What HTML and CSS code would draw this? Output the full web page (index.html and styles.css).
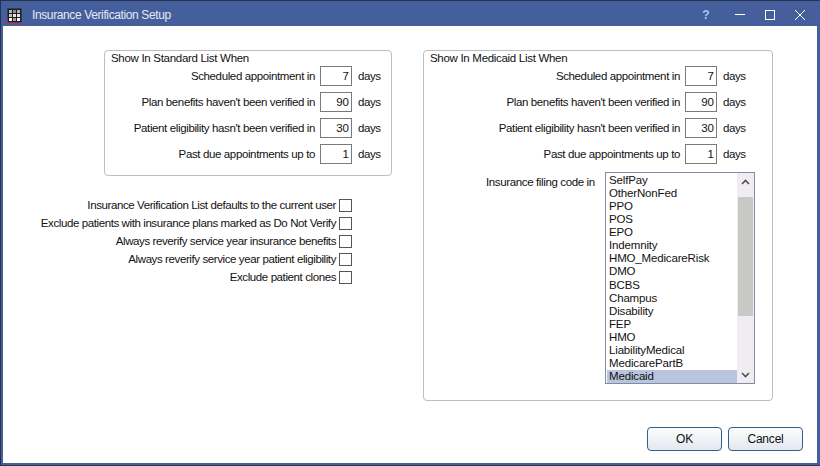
FILE: index.html
```html
<!DOCTYPE html>
<html lang="en">
<head>
<meta charset="utf-8">
<title>Insurance Verification Setup</title>
<link rel="stylesheet" href="styles.css">
</head>
<body>
<div class="window">
  <header class="titlebar">
    <svg class="appicon" width="15" height="15" viewBox="0 0 15 15">
      <rect x="0.5" y="0.5" width="14" height="14" fill="#1c1c1c"/>
      <path d="M2 2h3v3H2zM10 2h3v3h-3z" fill="#b4b4b4"/>
      <path d="M6 2h3v3H6z" fill="#8c8c8c"/>
      <path d="M2 6h3v3H2z" fill="#c4c4c4"/>
      <path d="M6 6h3v3H6zM10 6h3v3h-3z" fill="#e6e6e6"/>
      <path d="M2 10h3v3H2zM10 10h3v3h-3z" fill="#fafafa"/>
      <path d="M6 10h3v3H6z" fill="#a0a0a0"/>
      <path d="M0.5 10v4.5h14" fill="none" stroke="#d01818"/>
    </svg>
    <span class="title">Insurance Verification Setup</span>
    <span class="help">?</span>
    <svg class="ctl" width="12" height="12" viewBox="0 0 12 12"><path d="M1 5.5h10" stroke="#fff"/></svg>
    <svg class="ctl" width="12" height="12" viewBox="0 0 12 12"><rect x="1.5" y="1.5" width="9" height="9" fill="none" stroke="#fff"/></svg>
    <svg class="ctl" width="12" height="12" viewBox="0 0 12 12"><path d="M1 1l10 10M11 1L1 11" stroke="#fff" fill="none"/></svg>
  </header>
  <main class="client">
    <div class="columns">
      <div class="leftcol">
        <fieldset class="group group-std">
          <legend class="group-title">Show In Standard List When</legend>
          <div class="row"><label class="lbl">Scheduled appointment in</label><span class="num">7</span><span class="unit">days</span></div>
          <div class="row"><label class="lbl">Plan benefits haven't been verified in</label><span class="num">90</span><span class="unit">days</span></div>
          <div class="row"><label class="lbl">Patient eligibility hasn't been verified in</label><span class="num">30</span><span class="unit">days</span></div>
          <div class="row"><label class="lbl">Past due appointments up to</label><span class="num">1</span><span class="unit">days</span></div>
        </fieldset>
        <div class="checks">
          <div class="check"><span>Insurance Verification List defaults to the current user</span><i class="box"></i></div>
          <div class="check"><span>Exclude patients with insurance plans marked as Do Not Verify</span><i class="box"></i></div>
          <div class="check"><span>Always reverify service year insurance benefits</span><i class="box"></i></div>
          <div class="check"><span>Always reverify service year patient eligibility</span><i class="box"></i></div>
          <div class="check"><span>Exclude patient clones</span><i class="box"></i></div>
        </div>
      </div>
      <fieldset class="group group-med">
        <legend class="group-title">Show In Medicaid List When</legend>
        <div class="row"><label class="lbl">Scheduled appointment in</label><span class="num">7</span><span class="unit">days</span></div>
        <div class="row"><label class="lbl">Plan benefits haven't been verified in</label><span class="num">90</span><span class="unit">days</span></div>
        <div class="row"><label class="lbl">Patient eligibility hasn't been verified in</label><span class="num">30</span><span class="unit">days</span></div>
        <div class="row"><label class="lbl">Past due appointments up to</label><span class="num">1</span><span class="unit">days</span></div>
        <div class="filing">
          <label class="lbl filing-lbl">Insurance filing code in</label>
          <div class="listbox">
            <ul class="items">
              <li>SelfPay</li><li>OtherNonFed</li><li>PPO</li><li>POS</li><li>EPO</li><li>Indemnity</li><li>HMO_MedicareRisk</li><li>DMO</li><li>BCBS</li><li>Champus</li><li>Disability</li><li>FEP</li><li>HMO</li><li>LiabilityMedical</li><li>MedicarePartB</li><li class="sel">Medicaid</li>
            </ul>
            <div class="scroll">
              <div class="sbtn"><svg width="9" height="6" viewBox="0 0 9 6"><path d="M1 5l3.5-3.5L8 5" fill="none" stroke="#505050" stroke-width="1.6"/></svg></div>
              <div class="thumb"></div>
              <div class="track"></div>
              <div class="sbtn"><svg width="9" height="6" viewBox="0 0 9 6"><path d="M1 1l3.5 3.5L8 1" fill="none" stroke="#505050" stroke-width="1.6"/></svg></div>
            </div>
          </div>
        </div>
      </fieldset>
    </div>
    <footer class="actions">
      <button class="btn" type="button">OK</button>
      <button class="btn" type="button">Cancel</button>
    </footer>
  </main>
</div>
</body>
</html>
```
FILE: styles.css
```css
* { box-sizing: border-box; }
html, body { margin: 0; padding: 0; }
body {
  width: 820px;
  height: 466px;
  overflow: hidden;
  font-family: "Liberation Sans", Arial, sans-serif;
  font-size: 11.5px;
  color: #111;
  background: #fff;
}
.window {
  width: 820px;
  height: 466px;
  display: flex;
  flex-direction: column;
  background: #445f9b;
  border: 1px solid #26324f;
  border-right-color: #445f9b;
  padding: 0 2px 2px 2px;
}
.titlebar {
  height: 25px;
  flex: none;
  display: flex;
  align-items: center;
  color: #e4e9f4;
  padding-left: 4px;
}
.appicon { flex: none; margin-right: 10px; margin-top: 3px; }
.title { flex: 1; font-size: 12px; letter-spacing: -0.38px; margin-top: 2px; }
.help { width: 12px; text-align: center; color: #9fd0f5; font-size: 12px; font-weight: bold; margin-right: 22px; margin-top: 2px; }
.ctl { flex: none; margin-top: 3px; margin-right: 18px; }
.ctl:last-of-type { margin-right: 11px; }
.client {
  flex: 1;
  background: #fff;
  display: flex;
  flex-direction: column;
  padding: 24px 14px 12px 0;
  min-height: 0;
}
.columns { flex: 1; display: flex; align-items: flex-start; min-height: 0; }
.leftcol { width: 359px; flex: none; margin-left: 30px; margin-right: 31px; }
.group {
  margin: 0;
  border: 1px solid #bdbdbd;
  border-radius: 4px;
  position: relative;
  padding: 12px 0 0 0;
  min-width: 0;
}
.group-std { width: 288px; height: 126px; margin-left: 71px; padding-right: 5px; }
.group-med { width: 350px; height: 351px; padding-right: 21px; }
.group-title {
  position: absolute;
  top: 0;
  left: 6px;
  padding: 0;
  line-height: 14px;
  letter-spacing: -0.3px;
  background: #fff;
}
.row {
  height: 26px;
  display: flex;
  align-items: center;
  justify-content: flex-end;
}
.lbl { letter-spacing: -0.37px; white-space: nowrap; }
.num {
  width: 32px;
  height: 20px;
  margin-left: 5px;
  border: 1px solid #7a7a7a;
  text-align: right;
  padding: 2px 2px 0 0;
  line-height: 14px;
  flex: none;
}
.unit { width: 28px; margin-left: 6px; letter-spacing: -0.4px; flex: none; }
.checks { margin-top: 20px; display: flex; flex-direction: column; }
.check {
  height: 18px;
  display: flex;
  align-items: center;
  justify-content: flex-end;
  width: 319px;
  letter-spacing: -0.4px;
  white-space: nowrap;
}
.box {
  flex: none;
  width: 13px;
  height: 13px;
  margin-left: 3px;
  border: 1px solid #555;
  background: #fff;
}
.filing { display: flex; margin-top: 5px; }
.filing-lbl { flex: none; margin-left: 62px; width: 119px; padding-top: 4px; }
.listbox {
  flex: none;
  width: 150px;
  height: 212px;
  border: 1px solid #828ba0;
  display: flex;
  background: #fff;
}
.items { flex: 1; margin: 0; padding: 1px 0 0 1px; list-style: none; min-width: 0; }
.items li { height: 13.07px; line-height: 13px; padding-left: 2px; font-size: 11.5px; letter-spacing: -0.16px; }
.items .sel { background: #b9c4de; height: 13px; }
.scroll { width: 17px; flex: none; display: flex; flex-direction: column; background: #f0edf2; }
.sbtn { height: 17px; flex: none; display: flex; align-items: center; justify-content: center; }
.thumb { height: 119px; margin: 7px 1px 0; background: #c8c8c4; flex: none; }
.track { flex: 1; }
.actions { display: flex; justify-content: flex-end; gap: 6px; flex: none; }
.btn {
  width: 75px;
  height: 24px;
  padding: 0;
  font: inherit;
  font-size: 12px;
  color: #111;
  letter-spacing: -0.2px;
  border: 1px solid #2f6090;
  border-radius: 4px;
  background: linear-gradient(#fcfdfe, #e3e8ef);
}
```
